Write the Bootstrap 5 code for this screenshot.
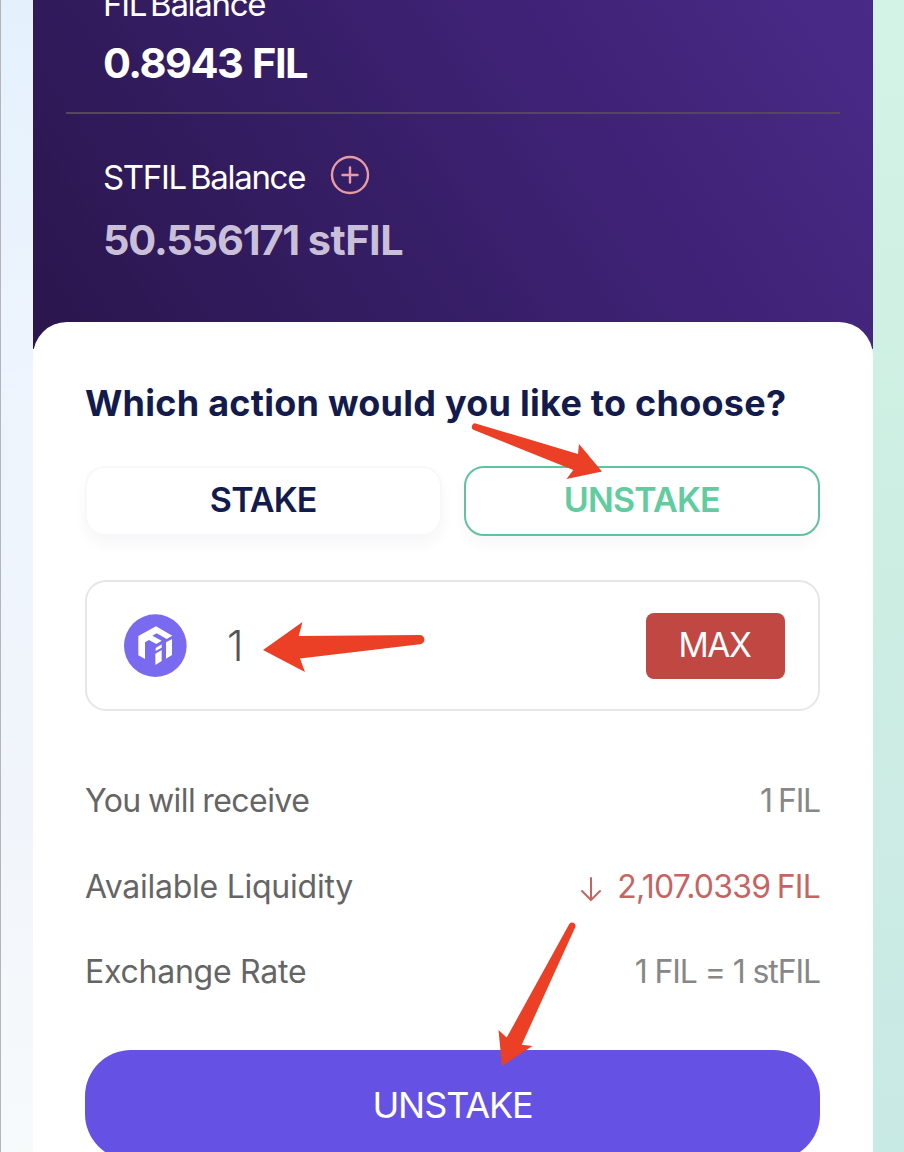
<!DOCTYPE html>
<html lang="en">
<head>
<meta charset="utf-8">
<meta name="viewport" content="width=device-width, initial-scale=1">
<title>Unstake stFIL</title>
<link href="https://cdn.jsdelivr.net/npm/bootstrap@5.3.0/dist/css/bootstrap.min.css" rel="stylesheet">
<style>
html,body{height:1152px;overflow:hidden}
body{font-family:Inter,"Open Sans",sans-serif;color:#131b4d;background:#fff}
.stage{height:1152px;overflow:hidden;padding:0 31px 0 32px;border-left:1px solid #b3b5bb;
 background:linear-gradient(#e4f1fd,#edf4fd 30%,#f1f5fb 70%,#f7fafb) left/50% 100% no-repeat,linear-gradient(#d3f3e6,#cdeee2 45%,#cbebe4 75%,#c8eae5) right/50% 100% no-repeat}
.balances{height:349px;background:linear-gradient(56deg,#2a154c 0%,#341d62 35%,#3d2173 60%,#4a2a88 100%);color:#fff;overflow:hidden}
.wallet{padding:0 37px;white-space:nowrap}
.wallet-first{height:112px;margin:0 33px}
.wallet-second{margin:0 33px;border-top:2px solid #57465f}
.wallet-first .lbl{margin-top:-16px}
.wallet-first .amount{margin-top:14px}
.wallet-second .titleline{margin-top:43px;gap:25px}
.wallet-second .titleline svg{margin-top:-4px}
.wallet-second .amount{margin-top:18px;letter-spacing:-1.2px;word-spacing:0}
.wallet-second .amount .unit{letter-spacing:-.5px}
.lbl{font-size:33px;line-height:40px;letter-spacing:-1.3px;word-spacing:-4px}
.amount{font-size:41.5px;line-height:50px;font-weight:700;letter-spacing:-1.5px;word-spacing:1.5px}
.dim{color:#cabfd9}
.sheet{height:840px;margin-top:-27px;border-radius:34px 34px 0 0;background:#fff;padding:60px 53px 0 52px}
.sheet h1{font-size:36px;line-height:42px;font-weight:700;margin:0;white-space:nowrap;letter-spacing:.25px}
.choices{margin-top:42px;gap:22px}
.choice{height:70px;border-radius:20px;border:2px solid #f8f8fa;background:#fff;color:#131b4d;font-size:34px;line-height:1;font-weight:600;letter-spacing:-.8px;box-shadow:0 8px 14px rgba(40,50,90,.04);padding:0 0 2px}
.choice.on{border-color:#61c2a0;color:#61cca0}
.field{height:131px;margin-top:44px;border:2px solid #e6e6e7;border-radius:21px;padding:0 33px 0 37px}
.qty{font-size:42px;font-weight:300;color:#555;line-height:50px;margin-left:40px}
.max{width:139px;height:66px;border-radius:8px;border:0;background:#c14743;color:#fff;font-size:33.5px;line-height:1;letter-spacing:-1.4px;padding:0 2px 0 0}
.facts{margin-top:69px;gap:43.5px;font-size:32px;color:#656565;line-height:42px;white-space:nowrap}
.facts .val{color:#878787;letter-spacing:-1.1px}
.facts .val.short{letter-spacing:-1.2px;word-spacing:-1.5px}
.facts .red{color:#c76462;gap:15px;letter-spacing:-.75px;word-spacing:-2px}
.facts .red svg{margin-top:4px}
.tight{letter-spacing:-.55px;word-spacing:-1.3px}
.snug{letter-spacing:-.25px}
.go{height:110px;margin-top:57px;border-radius:46px;border:0;background:#6552e5;color:#fff;font-size:36px;line-height:1;letter-spacing:-1.1px;padding:0}
.pointers{left:0;top:0;pointer-events:none}
</style>
</head>
<body>
<main class="stage">
<section class="balances">
 <div class="wallet wallet-first d-flex flex-column">
  <div class="lbl">FIL Balance</div>
  <div class="amount">0.8943 FIL</div>
 </div>
 <div class="wallet wallet-second">
  <div class="titleline d-flex align-items-center">
   <span class="lbl">STFIL Balance</span>
   <svg width="40" height="40" viewBox="0 0 40 40" fill="none" stroke="#e99ba4" stroke-width="2.4" stroke-linecap="round"><circle cx="20" cy="20" r="18"/><path d="M12.500 20h15M20 12.500v15"/></svg>
  </div>
  <div class="amount dim">50.556171 <span class="unit">stFIL</span></div>
 </div>
</section>
<section class="sheet position-relative">
 <h1>Which action would you like to choose?</h1>
 <div class="choices d-flex">
  <button class="choice flex-fill w-50">STAKE</button>
  <button class="choice on flex-fill w-50">UNSTAKE</button>
 </div>
 <div class="field d-flex align-items-center">
  <svg width="63" height="63" viewBox="132 133 189 189"><circle cx="226" cy="228" r="94" fill="#796af0"/><path fill="#fff" d="M228 170l49 28-17 10-30-17-13 7 28 15-16 10-22-12-12 7v50l-20-11v-58zM276 208v48l-18 11v-49zM227 235l18-11v10l-18 10zM226 252l19-11v33l-19 12z"/></svg>
  <span class="qty">1</span>
  <button class="max ms-auto">MAX</button>
 </div>
 <div class="facts d-flex flex-column">
  <div class="d-flex justify-content-between"><span class="tight">You will receive</span><span class="val short">1 FIL</span></div>
  <div class="d-flex justify-content-between"><span class="snug">Available Liquidity</span><span class="red d-flex align-items-center"><svg width="22" height="26" viewBox="0 0 22 26" fill="none" stroke="#c76462" stroke-width="2" stroke-linecap="round"><path d="M11 2v22M2 15l9 9 9-9"/></svg><span>2,107.0339 FIL</span></span></div>
  <div class="d-flex justify-content-between"><span class="snug">Exchange Rate</span><span class="val">1 FIL = 1 stFIL</span></div>
 </div>
 <button class="go w-100">UNSTAKE</button>
</section>
</main>
<svg class="pointers position-absolute" width="904" height="1152" viewBox="0 0 904 1152" fill="#eb4026">
<path d="M476.500 423.700L578 454l1-10 23 27.500-35.500 7.500 6.800-9L474 430a3.300 3.300 0 0 1 2.500-6.300z"/>
<path d="M263 650l39.500-28-3.800 14 121-1a4.600 4.600 0 0 1 .3 9.200L300 658.500l5 13.500z"/>
<path d="M502 1066l-3.500-36 8.200 7.500L569 924.500a3.400 3.400 0 0 1 6.200 2.800L521.700 1044.700l10.800 1.300z"/>
</svg>
<script src="https://cdn.jsdelivr.net/npm/bootstrap@5.3.0/dist/js/bootstrap.bundle.min.js"></script>
</body>
</html>
